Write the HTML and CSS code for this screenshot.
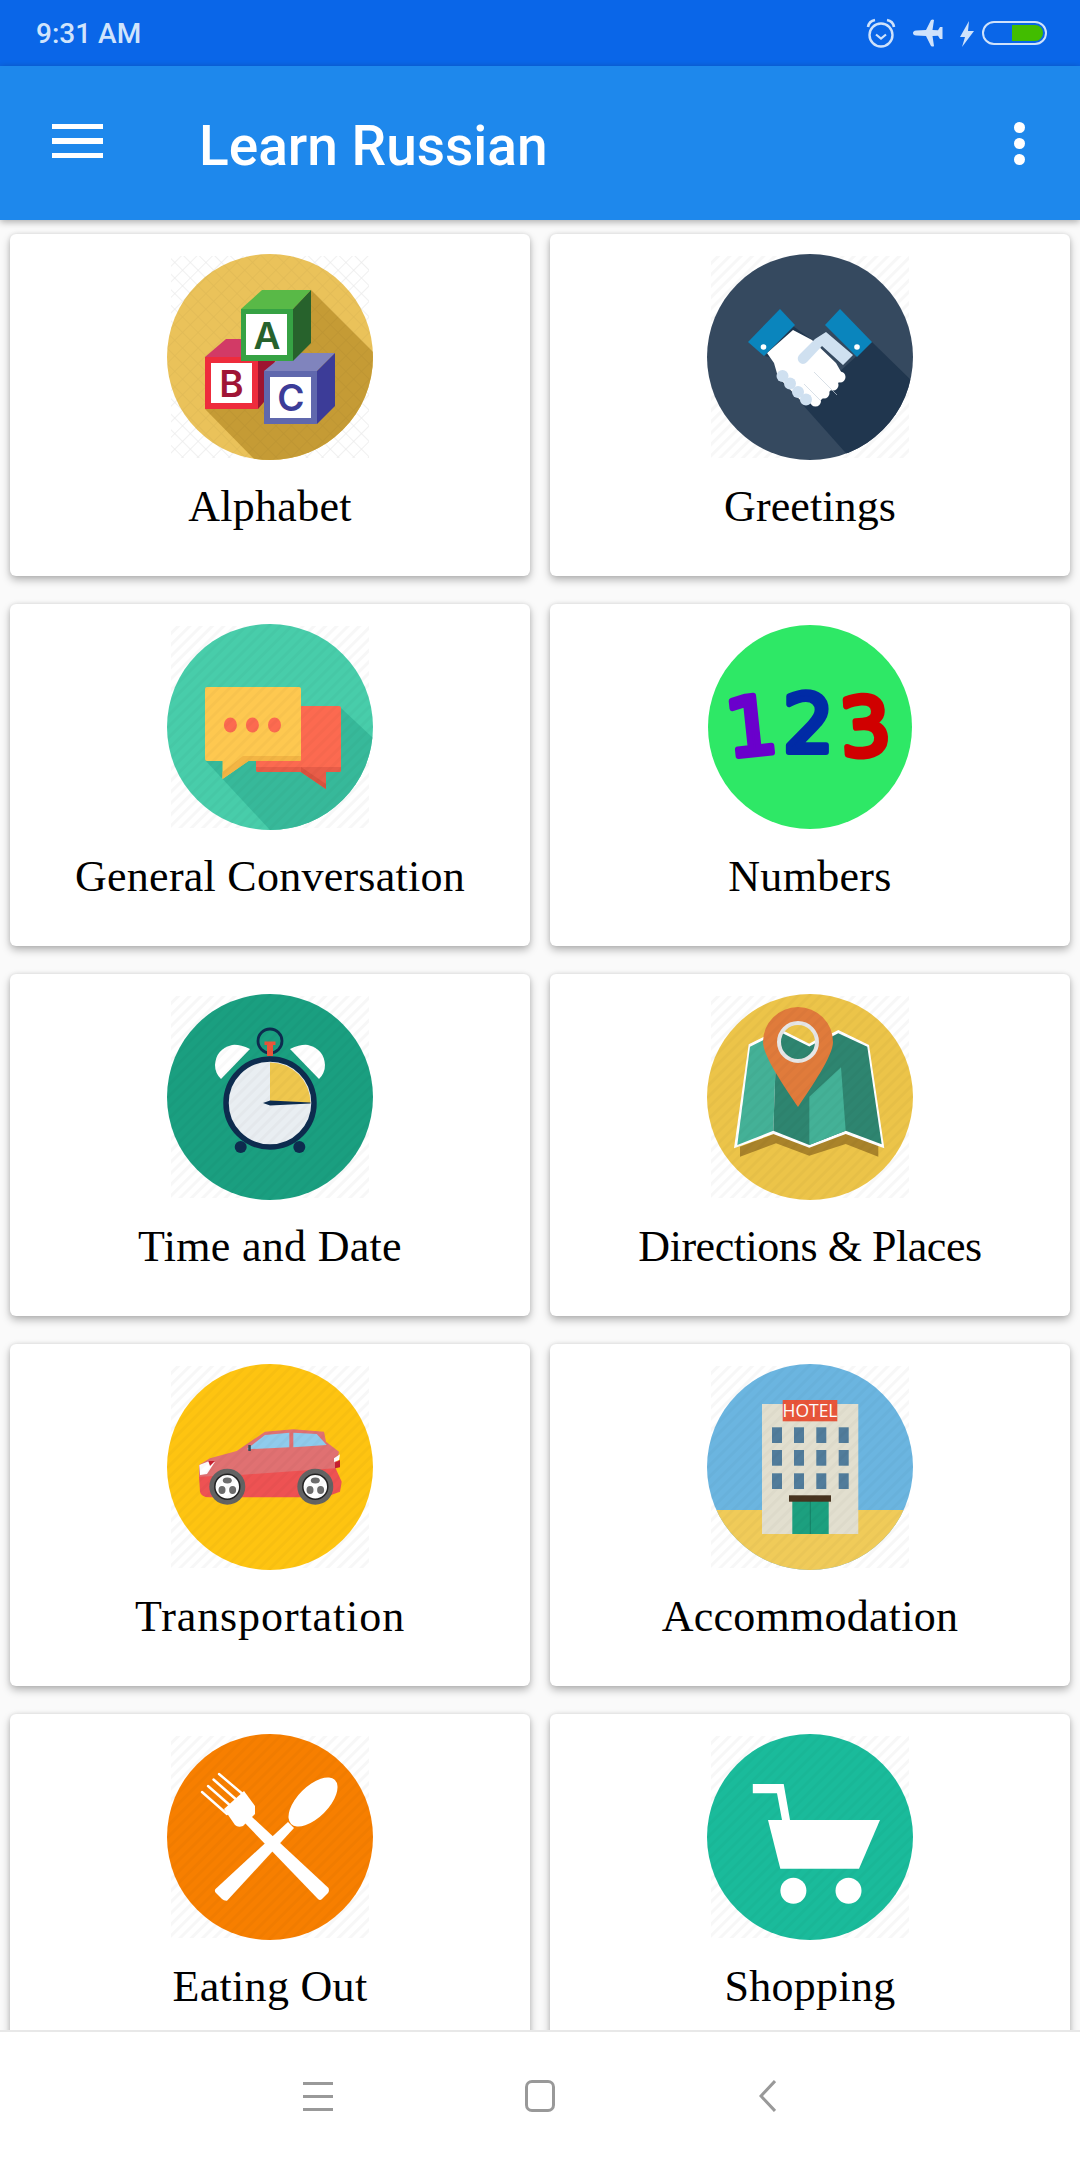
FILE: index.html
```html
<!DOCTYPE html>
<html lang="en">
<head>
<meta charset="utf-8">
<title>Learn Russian</title>
<link rel="stylesheet" href="styles.css">
</head>
<body>
<svg class="defs" width="0" height="0" aria-hidden="true">
  <defs>
    <pattern id="stripes" width="8" height="8" patternUnits="userSpaceOnUse" patternTransform="rotate(45)">
      <rect width="3" height="8" fill="#f7f7f7"/>
    </pattern>
    <pattern id="over" width="8" height="8" patternUnits="userSpaceOnUse" patternTransform="rotate(45)">
      <rect width="3" height="8" fill="#000" fill-opacity=".025"/>
    </pattern>
    <pattern id="cross" width="11" height="11" patternUnits="userSpaceOnUse" patternTransform="rotate(45)">
      <path d="M0 0H11M0 0V11" stroke="#ebebeb" stroke-width="1.500" fill="none"/>
    </pattern>
    <pattern id="crossover" width="11" height="11" patternUnits="userSpaceOnUse" patternTransform="rotate(45)">
      <path d="M0 0H11M0 0V11" stroke="#000" stroke-opacity=".04" stroke-width="1.500" fill="none"/>
    </pattern>
    <clipPath id="disc"><circle cx="103" cy="103" r="103"/></clipPath>
    <clipPath id="lens"><circle cx="91" cy="48" r="19"/></clipPath>
  </defs>
</svg>
<div class="phone">
  <div class="status">
    <span class="time">9:31 AM</span>
    <div class="status-icons">
      <svg class="s-alarm" viewBox="0 0 30 30" width="30" height="30"><circle cx="15" cy="17" r="11.5" fill="none" stroke="#cfe2fb" stroke-width="2.4"/><path d="M10 16.5l5 4 5-4" fill="none" stroke="#cfe2fb" stroke-width="2.2"/><path d="M2 9Q3 3 9 2M28 9Q27 3 21 2" fill="none" stroke="#cfe2fb" stroke-width="2.6"/></svg>
      <svg class="s-plane" viewBox="0 0 32 28" width="32" height="28"><path d="M1 14q0-2 3-2.500l10-.5 5-10q2-1 3 0l-1.500 10 5.500.3 2-3.300h2.500v12h-2.500l-2-3.300-5.500.3 1.500 10q-1 1-3 0l-5-10-10-.5q-3-.5-3-2.500z" fill="#cfe2fb"/></svg>
      <svg class="s-bolt" viewBox="0 0 15 26" width="15" height="26"><path d="M10 0L1 16h5L3 26 15 10H9z" fill="#cfe2fb"/></svg>
      <div class="battery"><div class="battery-fill"></div></div>
    </div>
  </div>
  <header class="bar">
    <div class="burger"><i></i><i></i><i></i></div>
    <h1 class="title">Learn Russian</h1>
    <div class="more"><i></i><i></i><i></i></div>
  </header>
  <main class="grid">
    <div class="cell"><a class="card">
      <svg class="icon" viewBox="0 0 206 206">
        <rect x="4" y="2" width="198" height="202" fill="url(#cross)"/>
        <circle cx="103" cy="103" r="103" fill="#eac25a"/>
        <path clip-path="url(#disc)" d="M144 36L206 98V206H88L38 155z" fill="#c59b35"/>
        <circle cx="103" cy="103" r="103" fill="url(#crossover)"/>
        <path d="M38 103L59 85H75V103z" fill="#d23a66"/>
        <path d="M91 103L108 107 97 148 91 155z" fill="#9e1430"/>
        <rect x="38" y="103" width="53" height="52" fill="#ee2c3c"/>
        <rect x="44" y="109" width="41" height="40" fill="#fff"/>
        <text class="block" x="64.500" y="143" fill="#a01535">B</text>
        <path d="M97 117L119 99H168L150 117z" fill="#8084bd"/>
        <path d="M150 117L168 99V152L150 170z" fill="#3c3c98"/>
        <rect x="97" y="117" width="53" height="53" fill="#6068ad"/>
        <rect x="103" y="123" width="41" height="41" fill="#fff"/>
        <text class="block" x="124" y="157" fill="#3c3c98">C</text>
        <path d="M74 55L95 36H144L126 55z" fill="#59b947"/>
        <path d="M126 55L144 36V89L126 107z" fill="#27622c"/>
        <rect x="74" y="55" width="52" height="52" fill="#36a244"/>
        <rect x="79" y="60" width="41" height="41" fill="#fff"/>
        <text class="block" x="100" y="95" fill="#27622c">A</text>
      </svg>
      <span class="label">Alphabet</span>
    </a></div>
    <div class="cell"><a class="card">
      <svg class="icon" viewBox="0 0 206 206">
        <rect x="4" y="2" width="198" height="202" fill="url(#stripes)"/>
        <circle cx="103" cy="103" r="103" fill="#35495f"/>
        <path clip-path="url(#disc)" d="M165 88L206 128V206H145L96 151z" fill="#20364e"/>
        <path d="M86 72L108 88 84 110 58 102z" fill="#20364e"/>
        <path d="M60 99L86 76 105 86 129 109 137 123 114 146 98 151 71 123 67 109z" fill="#fff"/>
        <circle cx="133" cy="123" r="5.500" fill="#fff"/>
        <circle cx="126" cy="131" r="5.500" fill="#fff"/>
        <circle cx="117" cy="139" r="5.500" fill="#fff"/>
        <circle cx="108.500" cy="147" r="5.500" fill="#fff"/>
        <path d="M107 118l23 23M97 130l17 17" stroke="#c9d3dc" stroke-width=".7"/>
        <circle cx="75.500" cy="122" r="6" fill="#cfe0f0"/>
        <circle cx="83" cy="129.500" r="6" fill="#cfe0f0"/>
        <circle cx="91" cy="138" r="6" fill="#cfe0f0"/>
        <circle cx="99" cy="145.500" r="6" fill="#cfe0f0"/>
        <path d="M119 78L146 101 136 111 115 92 100 108Q96 112 92 108 89 104 93 100L108 85z" fill="#cfe0f0"/>
        <path d="M73 55L88 71 57 102 41 88z" fill="#0a85bd"/>
        <path d="M133 55L118 71 150 103 165 88z" fill="#0a85bd"/>
        <circle cx="56.500" cy="93" r="2.800" fill="#fff"/>
        <circle cx="150" cy="93" r="2.800" fill="#fff"/>
      </svg>
      <span class="label label-even">Greetings</span>
    </a></div>
    <div class="cell"><a class="card">
      <svg class="icon" viewBox="0 0 206 206">
        <rect x="4" y="2" width="198" height="202" fill="url(#stripes)"/>
        <circle cx="103" cy="103" r="103" fill="#48cdaa"/>
        <path clip-path="url(#disc)" d="M174 84L206 114V206H103L38 136z" fill="#37b99a"/>
        <path d="M89 82H172Q174 82 174 84V146Q174 148 172 148H159V165L134 148H91Q89 148 89 146z" fill="#fc6a50"/>
        <path d="M89 143H174V146Q174 148 172 148H159V165L134 148H91Q89 148 89 146z" fill="#e85d48"/>
        <path d="M134 143L159 160V165L134 148z" fill="#d9533f"/>
        <path d="M40 63H132Q134 63 134 65V135Q134 137 132 137H81.500L55.500 155V137H40Q38 137 38 135V65Q38 63 40 63z" fill="#fec850"/>
        <path d="M38 132H134V135Q134 137 132 137H81.500L55.500 155V148L76 132z" fill="#f3b544"/>
        <ellipse cx="63.400" cy="101" rx="6.500" ry="7.500" fill="#fc6a50"/>
        <ellipse cx="85.400" cy="101" rx="6.500" ry="7.500" fill="#fc6a50"/>
        <ellipse cx="107.500" cy="101" rx="6.500" ry="7.500" fill="#fc6a50"/>
        <circle cx="103" cy="103" r="103" fill="url(#over)"/>
      </svg>
      <span class="label label-snug">General Conversation</span>
    </a></div>
    <div class="cell"><a class="card">
      <svg class="icon" viewBox="0 0 206 206">
        <circle cx="103" cy="103" r="102" fill="#2ee866"/>
        <text class="digit" x="19" y="131" fill="#6a00cc" stroke="#6a00cc" transform="rotate(-6 40 105)">1</text>
        <text class="digit" x="76" y="128" fill="#002ba6" stroke="#002ba6">2</text>
        <text class="digit" x="133" y="131" fill="#d00000" stroke="#d00000" transform="rotate(-4 158 105)">3</text>
      </svg>
      <span class="label">Numbers</span>
    </a></div>
    <div class="cell"><a class="card">
      <svg class="icon" viewBox="0 0 206 206">
        <rect x="4" y="2" width="198" height="202" fill="url(#stripes)"/>
        <circle cx="103" cy="103" r="103" fill="#1a9f80"/>
        <path d="M83 55Q72 50 65 51 49 55 48 71 48 79 54 85z" fill="#fff"/>
        <path d="M123 55Q134 50 141 51 157 55 158 71 158 79 152 85z" fill="#fff"/>
        <circle cx="103" cy="47" r="12" fill="none" stroke="#0d2c4f" stroke-width="2.800"/>
        <path d="M97.500 47.500H108.500V51H106V62H100V51H97.500z" fill="#e8553a"/>
        <circle cx="73.700" cy="153" r="6" fill="#0d2c4f"/>
        <circle cx="132.300" cy="153" r="6" fill="#0d2c4f"/>
        <circle cx="103" cy="109" r="44" fill="#e9eef2" stroke="#0d2c4f" stroke-width="5.500"/>
        <path d="M103 109V68.500A40.500 40.500 0 0 1 143.500 109z" fill="#efc74d"/>
        <path d="M96 109L103 106.500 143.500 108.500V109.500L103 111.500z" fill="#0d2c4f"/>
        <circle cx="103" cy="103" r="103" fill="url(#over)"/>
      </svg>
      <span class="label">Time and Date</span>
    </a></div>
    <div class="cell"><a class="card">
      <svg class="icon" viewBox="0 0 206 206">
        <rect x="4" y="2" width="198" height="202" fill="url(#stripes)"/>
        <circle cx="103" cy="103" r="103" fill="#ecc449"/>
        <path d="M33 152.700L69 139.300 102.300 152.700 138.700 139.300 171.300 151V162.700L138.700 150 102.300 161.700 69 149.300 33 162.700z" fill="#a9832a"/>
        <path d="M41.700 50.300L69.700 36.700 102.300 51 131.300 36 162 51 177.300 154.300 138.700 140 102.300 153.700 66.300 140 27 154.300z" fill="#fff"/>
        <path d="M43 52.700L69.700 39.300 66.300 136.700 30.300 151z" fill="#44b197"/>
        <path d="M69.700 39.300L102.300 54.300 131.300 39.300 160.300 52.700 174.700 150.300 138.700 136.700 102.300 151 66.300 136.700z" fill="#2e8570"/>
        <path d="M102.300 102.700L134 73.300 138.700 136.700 102.300 151z" fill="#44b197"/>
        <path d="M56 48A35 35 0 0 1 126 48C126 62 105 92 91 113 77 92 56 62 56 48z" fill="#e07b3b"/>
        <circle cx="91" cy="48" r="19" fill="#ecc449"/>
        <g clip-path="url(#lens)">
          <path d="M70 35L102.300 51 115 44V75H70z" fill="#2e8570"/>
          <path d="M70 35L102.300 51 115 44" fill="none" stroke="#fff" stroke-width="2.500"/>
        </g>
        <circle cx="91" cy="48" r="19" fill="none" stroke="#e6e6e6" stroke-width="4"/>
        <circle cx="103" cy="103" r="103" fill="url(#over)"/>
      </svg>
      <span class="label label-tight">Directions &amp; Places</span>
    </a></div>
    <div class="cell"><a class="card">
      <svg class="icon" viewBox="0 0 206 206">
        <rect x="4" y="2" width="198" height="202" fill="url(#stripes)"/>
        <circle cx="103" cy="103" r="103" fill="#fec411"/>
        <path d="M32 112L168 103 174.700 117.700 173 127.700 166 130.300 160 133.300H42.300Q34 133 33 127.700z" fill="#ee5253"/>
        <path d="M32 112.700V101L43 94.300 69.700 87 98 67.700 126.300 65.300 157 67.700 159 77.700 172 87.700 168 104.300 76.300 110.700z" fill="#e07172"/>
        <path d="M79.700 85.300L98 71 122.300 68.700V83.300z" fill="#8fcbec"/>
        <path d="M126.300 68.700L149.700 70 159.700 81 126.300 83.300z" fill="#8fcbec"/>
        <rect x="81.300" y="81" width="2.500" height="6" fill="#3a4a55"/>
        <path d="M32.300 101L42.300 97 48 97.700 40 110 33 111z" fill="#fff"/>
        <path d="M41.300 97H48L43 102z" fill="#c62030"/>
        <path d="M167 94.300L173 90.300 172 96 167 98z" fill="#fff"/>
        <path d="M168 98.500L173 96V103.300L168 104.300z" fill="#c62030"/>
        <circle cx="60.300" cy="122.700" r="18" fill="#636363"/>
        <circle cx="60.300" cy="122.700" r="12.500" fill="#fff" stroke="#222" stroke-width="1.500"/>
        <ellipse cx="60.300" cy="116.500" rx="4.500" ry="3" fill="#6d6d6d"/>
        <ellipse cx="55" cy="126" rx="3.500" ry="4" fill="#6d6d6d"/>
        <ellipse cx="65.600" cy="126" rx="3.500" ry="4" fill="#6d6d6d"/>
        <circle cx="148.300" cy="122.700" r="18" fill="#636363"/>
        <circle cx="148.300" cy="122.700" r="12.500" fill="#fff" stroke="#222" stroke-width="1.500"/>
        <ellipse cx="148.300" cy="116.500" rx="4.500" ry="3" fill="#6d6d6d"/>
        <ellipse cx="143" cy="126" rx="3.500" ry="4" fill="#6d6d6d"/>
        <ellipse cx="153.600" cy="126" rx="3.500" ry="4" fill="#6d6d6d"/>
        <circle cx="103" cy="103" r="103" fill="url(#over)"/>
      </svg>
      <span class="label label-wider">Transportation</span>
    </a></div>
    <div class="cell"><a class="card">
      <svg class="icon" viewBox="0 0 206 206">
        <rect x="4" y="2" width="198" height="202" fill="url(#stripes)"/>
        <circle cx="103" cy="103" r="103" fill="#6bb5e0"/>
        <path clip-path="url(#disc)" d="M0 146H206V206H0z" fill="#f0cb59"/>
        <rect x="55" y="40" width="96.300" height="130" fill="#e2dfcf"/>
        <g fill="#517c9b">
          <rect x="65" y="63.300" width="10" height="15.700"/><rect x="87" y="63.300" width="10" height="15.700"/><rect x="109.300" y="63.300" width="10" height="15.700"/><rect x="131.700" y="63.300" width="10" height="15.700"/>
          <rect x="65" y="86" width="10" height="15.700"/><rect x="87" y="86" width="10" height="15.700"/><rect x="109.300" y="86" width="10" height="15.700"/><rect x="131.700" y="86" width="10" height="15.700"/>
          <rect x="65" y="109.300" width="10" height="15.700"/><rect x="87" y="109.300" width="10" height="15.700"/><rect x="109.300" y="109.300" width="10" height="15.700"/><rect x="131.700" y="109.300" width="10" height="15.700"/>
        </g>
        <rect x="85.300" y="137" width="36.400" height="33" fill="#1ca07f"/>
        <rect x="102.800" y="137" width="1" height="33" fill="#168067"/>
        <rect x="82" y="131.300" width="42" height="6.400" fill="#47331f"/>
        <rect x="75.700" y="36" width="54.600" height="21.300" fill="#e8553a"/>
        <text class="sign" x="103" y="53">HOTEL</text>
        <circle cx="103" cy="103" r="103" fill="url(#over)"/>
      </svg>
      <span class="label label-snug">Accommodation</span>
    </a></div>
    <div class="cell"><a class="card">
      <svg class="icon" viewBox="0 0 206 206">
        <rect x="4" y="2" width="198" height="202" fill="url(#stripes)"/>
        <circle cx="103" cy="103" r="103" fill="#f77f00"/>
        <circle cx="103" cy="103" r="103" fill="url(#over)"/>
        <g fill="#fff">
          <ellipse cx="146" cy="68" rx="15.500" ry="31" transform="rotate(45 146 68)"/>
          <path d="M121 88L127 94 60 166.700Q57 167 55 165L49 159Q47 157 48.500 155z"/>
          <path d="M77 88L84 82 161.500 154Q162.500 157 161 159L155 165Q153 167 151 165z"/>
          <path d="M57 75L77 57 88 72 88 80 76 92Q71 94 68 91z"/>
        </g>
        <g stroke="#fff" stroke-width="2.400" stroke-linecap="round">
          <path d="M35 58L60 80M41 52L66 74M46.500 45.500L72 68M52 40L78 62"/>
        </g>
      </svg>
      <span class="label">Eating Out</span>
    </a></div>
    <div class="cell"><a class="card">
      <svg class="icon" viewBox="0 0 206 206">
        <rect x="4" y="2" width="198" height="202" fill="url(#stripes)"/>
        <circle cx="103" cy="103" r="103" fill="#1abb9b"/>
        <circle cx="103" cy="103" r="103" fill="url(#over)"/>
        <g fill="#fff">
          <path d="M45.800 50H76.700L83 86H75L70 59.300H45.800z"/>
          <path d="M61 86H173L152 134.700H73.300z"/>
          <circle cx="86.400" cy="156.700" r="13"/>
          <circle cx="141.500" cy="156.700" r="13"/>
        </g>
      </svg>
      <span class="label">Shopping</span>
    </a></div>
  </main>
  <nav class="nav">
    <div class="nav-menu"><i></i><i></i><i></i></div>
    <div class="nav-home"></div>
    <svg class="nav-back" viewBox="0 0 17 32" width="17" height="32"><path d="M16 1L2 16 16 31" fill="none" stroke="#999" stroke-width="3"/></svg>
  </nav>
</div>
</body>
</html>
```

FILE: styles.css
```css
* { box-sizing: border-box; }
html, body { margin: 0; padding: 0; }
body { background: #fafafa; }
.defs { display: block; height: 0; }
.phone { width: 1080px; height: 2160px; display: flex; flex-direction: column; overflow: hidden; background: #fafafa; }

.status { flex: 0 0 66px; background: #0a66e8; display: flex; align-items: center; justify-content: space-between; padding: 0 33px 0 36px; }
.time { font: 500 28px/1 Roboto, "Liberation Sans", sans-serif; color: #d0e4fc; margin-top: 2px; }
.status-icons { display: flex; align-items: center; }
.s-alarm { margin-right: 16px; }
.s-plane { margin-right: 15px; }
.s-bolt { margin-right: 8px; margin-top: 2px; }
.battery { width: 65px; height: 24px; border: 2px solid #cfe2fb; border-radius: 12px; padding: 2px 2px 2px 28px; }
.battery-fill { height: 100%; background: #42bd00; border-radius: 0 9px 9px 0; }

.bar { flex: 0 0 154px; background: #1e88ec; display: flex; align-items: center; padding: 0 55px 0 52px; position: relative; z-index: 2; box-shadow: 0 2px 7px rgba(0,0,0,.32); }
.burger { width: 51px; display: flex; flex-direction: column; gap: 9px; margin-bottom: 4px; }
.burger i { display: block; height: 5.500px; background: #fff; }
.title { margin: 6px 0 0 96px; font: 500 55px/1 Roboto, "Liberation Sans", sans-serif; color: #fff; flex: 1; }
.more { display: flex; flex-direction: column; gap: 5px; }
.more i { display: block; width: 11px; height: 11px; border-radius: 50%; background: #fff; }

.grid { flex: 1; min-height: 0; overflow: hidden; display: grid; grid-template-columns: 540px 540px; grid-auto-rows: 370px; }
.cell { padding: 14px 10px; overflow: hidden; height: 370px; }
.card { display: flex; flex-direction: column; align-items: center; height: 342px; background: #fff; border-radius: 6px; box-shadow: 0 4px 9px rgba(0,0,0,.28), 0 0 4px rgba(0,0,0,.1); padding-top: 20px; }
.icon { width: 206px; height: 206px; display: block; flex: none; }
.label { margin-top: 22px; font: 400 44px/50px "Liberation Serif", "Times New Roman", serif; color: #000; letter-spacing: .3px; }
.label-even { letter-spacing: .1px; }
.label-snug { letter-spacing: .25px; }
.label-wider { letter-spacing: .9px; }
.label-tight { letter-spacing: -.45px; }
.block { font: 600 37px Inter, "Open Sans", sans-serif; text-anchor: middle; }
.digit { font: 400 80px "DejaVu Sans", sans-serif; stroke-width: 6; stroke-linejoin: round; stroke-linecap: round; }
.sign { font: 400 17.500px "Open Sans", sans-serif; fill: #fff; text-anchor: middle; }

.nav { flex: 0 0 130px; background: #fff; border-top: 2px solid #e8e8e8; position: relative; z-index: 2; display: flex; align-items: center; padding-left: 303px; }
.nav-menu { width: 30px; display: flex; flex-direction: column; gap: 10px; }
.nav-menu i { display: block; height: 3px; background: #999; }
.nav-home { width: 30px; height: 32px; border: 3px solid #999; border-radius: 7px; margin-left: 192px; }
.nav-back { display: block; margin-left: 204px; }
```
